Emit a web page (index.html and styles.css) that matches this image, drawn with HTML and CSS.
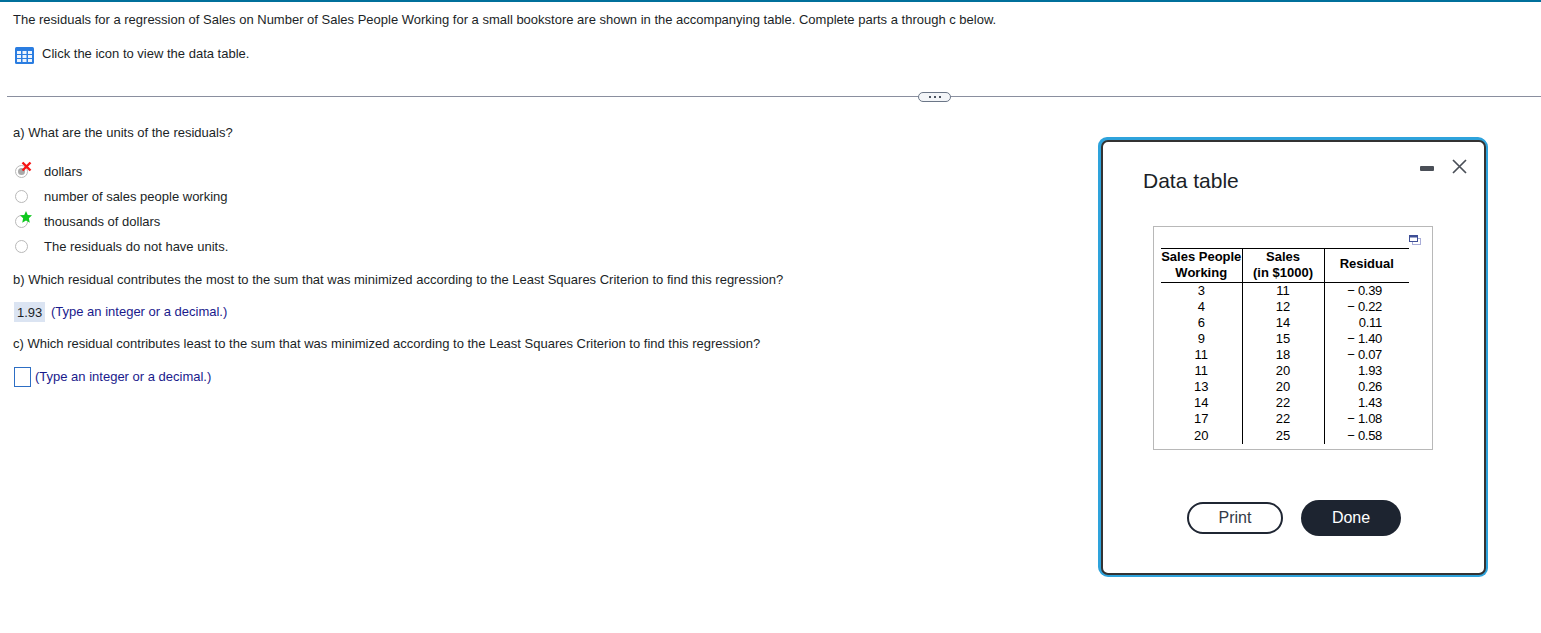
FILE: index.html
```html
<!DOCTYPE html>
<html lang="en">
<head>
<meta charset="utf-8">
<title>Data table</title>
<link rel="stylesheet" href="styles.css">
</head>
<body>
<main class="page">
  <section class="stem">
    <p class="intro">The residuals for a regression of Sales on Number of Sales People Working for a small bookstore are shown in the accompanying table. Complete parts a through c below.</p>
    <div class="icon-row">
      <svg class="grid-icon" width="19" height="17" viewBox="0 0 19 17" aria-hidden="true">
        <rect x="0" y="0" width="19" height="17" rx="1.5" fill="#2a7de1"/>
        <g fill="#ffffff" opacity="0.92">
          <rect x="2" y="4" width="4" height="3"/><rect x="7.5" y="4" width="4" height="3"/><rect x="13" y="4" width="4" height="3"/>
          <rect x="2" y="8" width="4" height="3"/><rect x="7.5" y="8" width="4" height="3"/><rect x="13" y="8" width="4" height="3"/>
          <rect x="2" y="12" width="4" height="3"/><rect x="7.5" y="12" width="4" height="3"/><rect x="13" y="12" width="4" height="3"/>
        </g>
      </svg>
      <span class="icon-label">Click the icon to view the data table.</span>
    </div>
  </section>

  <div class="divider">
    <span class="rule rule-left"></span>
    <span class="more"><i></i><i></i><i></i></span>
    <span class="rule rule-right"></span>
  </div>

  <section class="questions">
    <p class="q q-a">a) What are the units of the residuals?</p>
    <ul class="choices">
      <li class="choice">
        <span class="radio radio-on">
          <svg class="mark mark-x" width="11" height="11" viewBox="0 0 11 11" aria-hidden="true"><path d="M1.5 1.5 9.5 9.5M9.5 1.5 1.5 9.5" stroke="#f81414" stroke-width="2.4" fill="none"/></svg>
        </span>
        <span>dollars</span>
      </li>
      <li class="choice"><span class="radio"></span><span>number of sales people working</span></li>
      <li class="choice">
        <span class="radio">
          <svg class="mark mark-star" width="12" height="12" viewBox="0 0 13 13" aria-hidden="true"><path d="M6.5 0 8.4 4.3 13 4.7 9.6 7.9 10.6 12.7 6.5 10.2 2.4 12.7 3.4 7.9 0 4.7 4.6 4.3Z" fill="#0fc81e"/></svg>
        </span>
        <span>thousands of dollars</span>
      </li>
      <li class="choice"><span class="radio"></span><span>The residuals do not have units.</span></li>
    </ul>
    <p class="q q-b">b) Which residual contributes the most to the sum that was minimized according to the Least Squares Criterion to find this regression?</p>
    <p class="answer"><span class="filled">1.93</span><span class="hint hint-b">(Type an integer or a decimal.)</span></p>
    <p class="q q-c">c) Which residual contributes least to the sum that was minimized according to the Least Squares Criterion to find this regression?</p>
    <p class="answer answer-c"><span class="blank"></span><span class="hint hint-c">(Type an integer or a decimal.)</span></p>
  </section>
</main>

<aside class="dialog">
  <div class="dialog-controls">
    <span class="minimize"></span>
    <svg class="close" width="15" height="15" viewBox="0 0 15 15" aria-hidden="true"><path d="M1 1 14 14M14 1 1 14" stroke="#4a4f57" stroke-width="1.7" fill="none"/></svg>
  </div>
  <h2 class="dialog-title">Data table</h2>
  <div class="table-box">
    <svg class="popout" width="12" height="10" viewBox="0 0 12 10" aria-hidden="true">
      <rect x="3.5" y="3.5" width="8" height="6" fill="#fff" stroke="#a9add8"/>
      <rect x="0.5" y="0.5" width="8" height="6" fill="#fff" stroke="#3f4f96"/>
      <rect x="0.5" y="0.5" width="8" height="2" fill="#3f4f96"/>
    </svg>
    <table class="data">
      <thead>
        <tr><th>Sales People<br>Working</th><th>Sales<br>(in $1000)</th><th>Residual</th></tr>
      </thead>
      <tbody>
        <tr><td>3</td><td>11</td><td class="res">− 0.39</td></tr>
        <tr><td>4</td><td>12</td><td class="res">− 0.22</td></tr>
        <tr><td>6</td><td>14</td><td class="res">0.11</td></tr>
        <tr><td>9</td><td>15</td><td class="res">− 1.40</td></tr>
        <tr><td>11</td><td>18</td><td class="res">− 0.07</td></tr>
        <tr><td>11</td><td>20</td><td class="res">1.93</td></tr>
        <tr><td>13</td><td>20</td><td class="res">0.26</td></tr>
        <tr><td>14</td><td>22</td><td class="res">1.43</td></tr>
        <tr><td>17</td><td>22</td><td class="res">− 1.08</td></tr>
        <tr class="last"><td>20</td><td>25</td><td class="res">− 0.58</td></tr>
      </tbody>
    </table>
  </div>
  <div class="dialog-actions">
    <button class="btn btn-print" type="button">Print</button>
    <button class="btn btn-done" type="button">Done</button>
  </div>
</aside>
</body>
</html>
```
FILE: styles.css
```css
* { box-sizing: border-box; }
html, body { margin: 0; padding: 0; height: 100%; }
body {
  background: #fff;
  color: #1b1f27;
  font-family: "Liberation Sans", Arial, sans-serif;
  font-size: 13px;
  line-height: 16px;
  overflow: hidden;
  position: relative;
}
.page { border-top: 2px solid #00709b; }
p { margin: 0; }

.stem { padding: 10px 0 0 13px; height: 87px; }
.icon-row { display: flex; align-items: flex-start; margin-top: 17px; margin-left: 2px; gap: 8px; }
.grid-icon { flex: none; margin-top: 2px; }
.icon-label { margin-top: 1px; }

.divider { display: flex; align-items: center; height: 15px; margin-left: 7px; }
.rule { height: 1px; background: #8a8f9f; }
.rule-left { width: 911px; }
.rule-right { flex: 1; }
.more {
  width: 33px; height: 10px; border: 1.5px solid #6b7687; border-radius: 5px;
  display: flex; align-items: center; justify-content: center; gap: 3px; background: #f3f5f8;
}
.more i { width: 2px; height: 2px; background: #4a5260; display: block; }

.questions { padding: 21px 0 0 13px; }
.choices { list-style: none; margin: 18px 0 0; padding: 0; }
.choice { display: flex; align-items: center; height: 25px; margin-left: 2px; gap: 16px; }
.radio {
  position: relative; flex: none; width: 13px; height: 13px;
  border: 1px solid #b9b9b9; border-radius: 50%; background: #fff;
}
.radio-on::before {
  content: ""; position: absolute; left: 2px; top: 2px; width: 7px; height: 7px;
  border-radius: 50%; background: #a9a9a9;
}
.mark { position: absolute; }
.mark-x { left: 5px; top: -5px; }
.mark-star { left: 4px; top: -5px; }

.q-b { margin-top: 13px; }
.answer { display: flex; align-items: center; }
.answer:not(.answer-c) { margin-top: 14px; margin-left: 1px; }
.filled { background: #dbe4f2; padding: 1px 3px 0 3px; height: 20px; line-height: 19px; width: 31px; }
.hint { color: #1a1a8c; }
.hint-b { margin-left: 6px; }
.q-c { margin-top: 14px; }
.answer-c { margin-top: 15px; margin-left: 1px; }
.blank { width: 17px; height: 20px; border: 1px solid #2d6ec4; background: #fff; display: block; }
.hint-c { margin-left: 4px; }

.dialog {
  position: absolute; left: 1101px; top: 140px; width: 385px; height: 435px;
  background: #fff; border: 2px solid #333; border-radius: 7px;
  box-shadow: 0 0 0 2px #2ea3dc, -1px -1px 0 2px #2ea3dc;
  padding: 27px 0 0 40px;
}
.dialog-controls {
  position: absolute; right: 17px; top: 17px; display: flex; align-items: center; gap: 18px;
}
.minimize { width: 14px; height: 5px; border-radius: 1px; background: #4a4f57; display: block; margin-top: 4px; }
.close { display: block; }
.dialog-title { margin: 0; font-size: 21px; font-weight: 400; line-height: 24px; color: #1b1f27; }
.table-box {
  position: relative; margin: 33px 0 0 10px; width: 280px; height: 224px;
  border: 1px solid #b8b8b8; padding: 21px 0 0 7px;
}
.popout { position: absolute; right: 11px; top: 8px; }
.data { border-collapse: collapse; width: 248px; table-layout: fixed; color: #000; }
.data th, .data td { padding: 0; text-align: center; font-size: 13px; line-height: 16px; }
.data thead tr { border-top: 1px solid #000; border-bottom: 1px solid #000; }
.data th { font-weight: 700; height: 34px; vertical-align: top; }
.data th:nth-child(3) { padding-top: 7px; }
.data th:nth-child(1), .data td:nth-child(1) { width: 81px; border-right: 1px solid #000; }
.data th:nth-child(2), .data td:nth-child(2) { width: 82px; border-right: 1px solid #000; }
.data td { height: 16px; }
.data .last td { height: 17px; padding-top: 1px; }
.data td.res { text-align: right; padding-right: 27px; letter-spacing: -0.3px; }

.dialog-actions { display: flex; align-items: center; gap: 18px; margin: 50px 0 0 44px; }
.btn { font-family: inherit; font-size: 16px; border-radius: 18px; padding: 0; }
.btn-print { width: 96px; height: 32px; background: #fff; color: #333a47; border: 2px solid #1f2633; }
.btn-done { width: 100px; height: 36px; background: #1d2430; color: #fff; border: 0; }
```
